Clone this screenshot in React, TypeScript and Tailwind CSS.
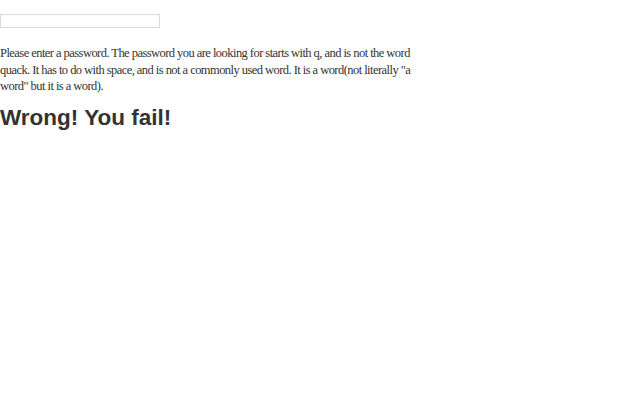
export default function App() {
  return (
    <div className="w-[640px] h-[400px] bg-white text-[#333] pt-[14px]">
      <input
        type="text"
        className="block w-[160px] h-[14px] border border-[#d9d9d9] bg-white outline-none"
      />
      <p
        className="mt-[17px] w-[420px] text-[12.5px] leading-[16.5px] tracking-[-0.55px]"
        style={{ fontFamily: '"Liberation Serif", serif' }}
      >
        Please enter a password. The password you are looking for starts with q, and is not the word quack. It has to do with space, and is not a commonly used word. It is a word(not literally "a word" but it is a word).
      </p>
      <h1
        className="mt-[10px] text-[22.5px] font-bold leading-[26px]"
        style={{ fontFamily: '"Liberation Sans", sans-serif' }}
      >
        Wrong! You fail!
      </h1>
    </div>
  );
}
